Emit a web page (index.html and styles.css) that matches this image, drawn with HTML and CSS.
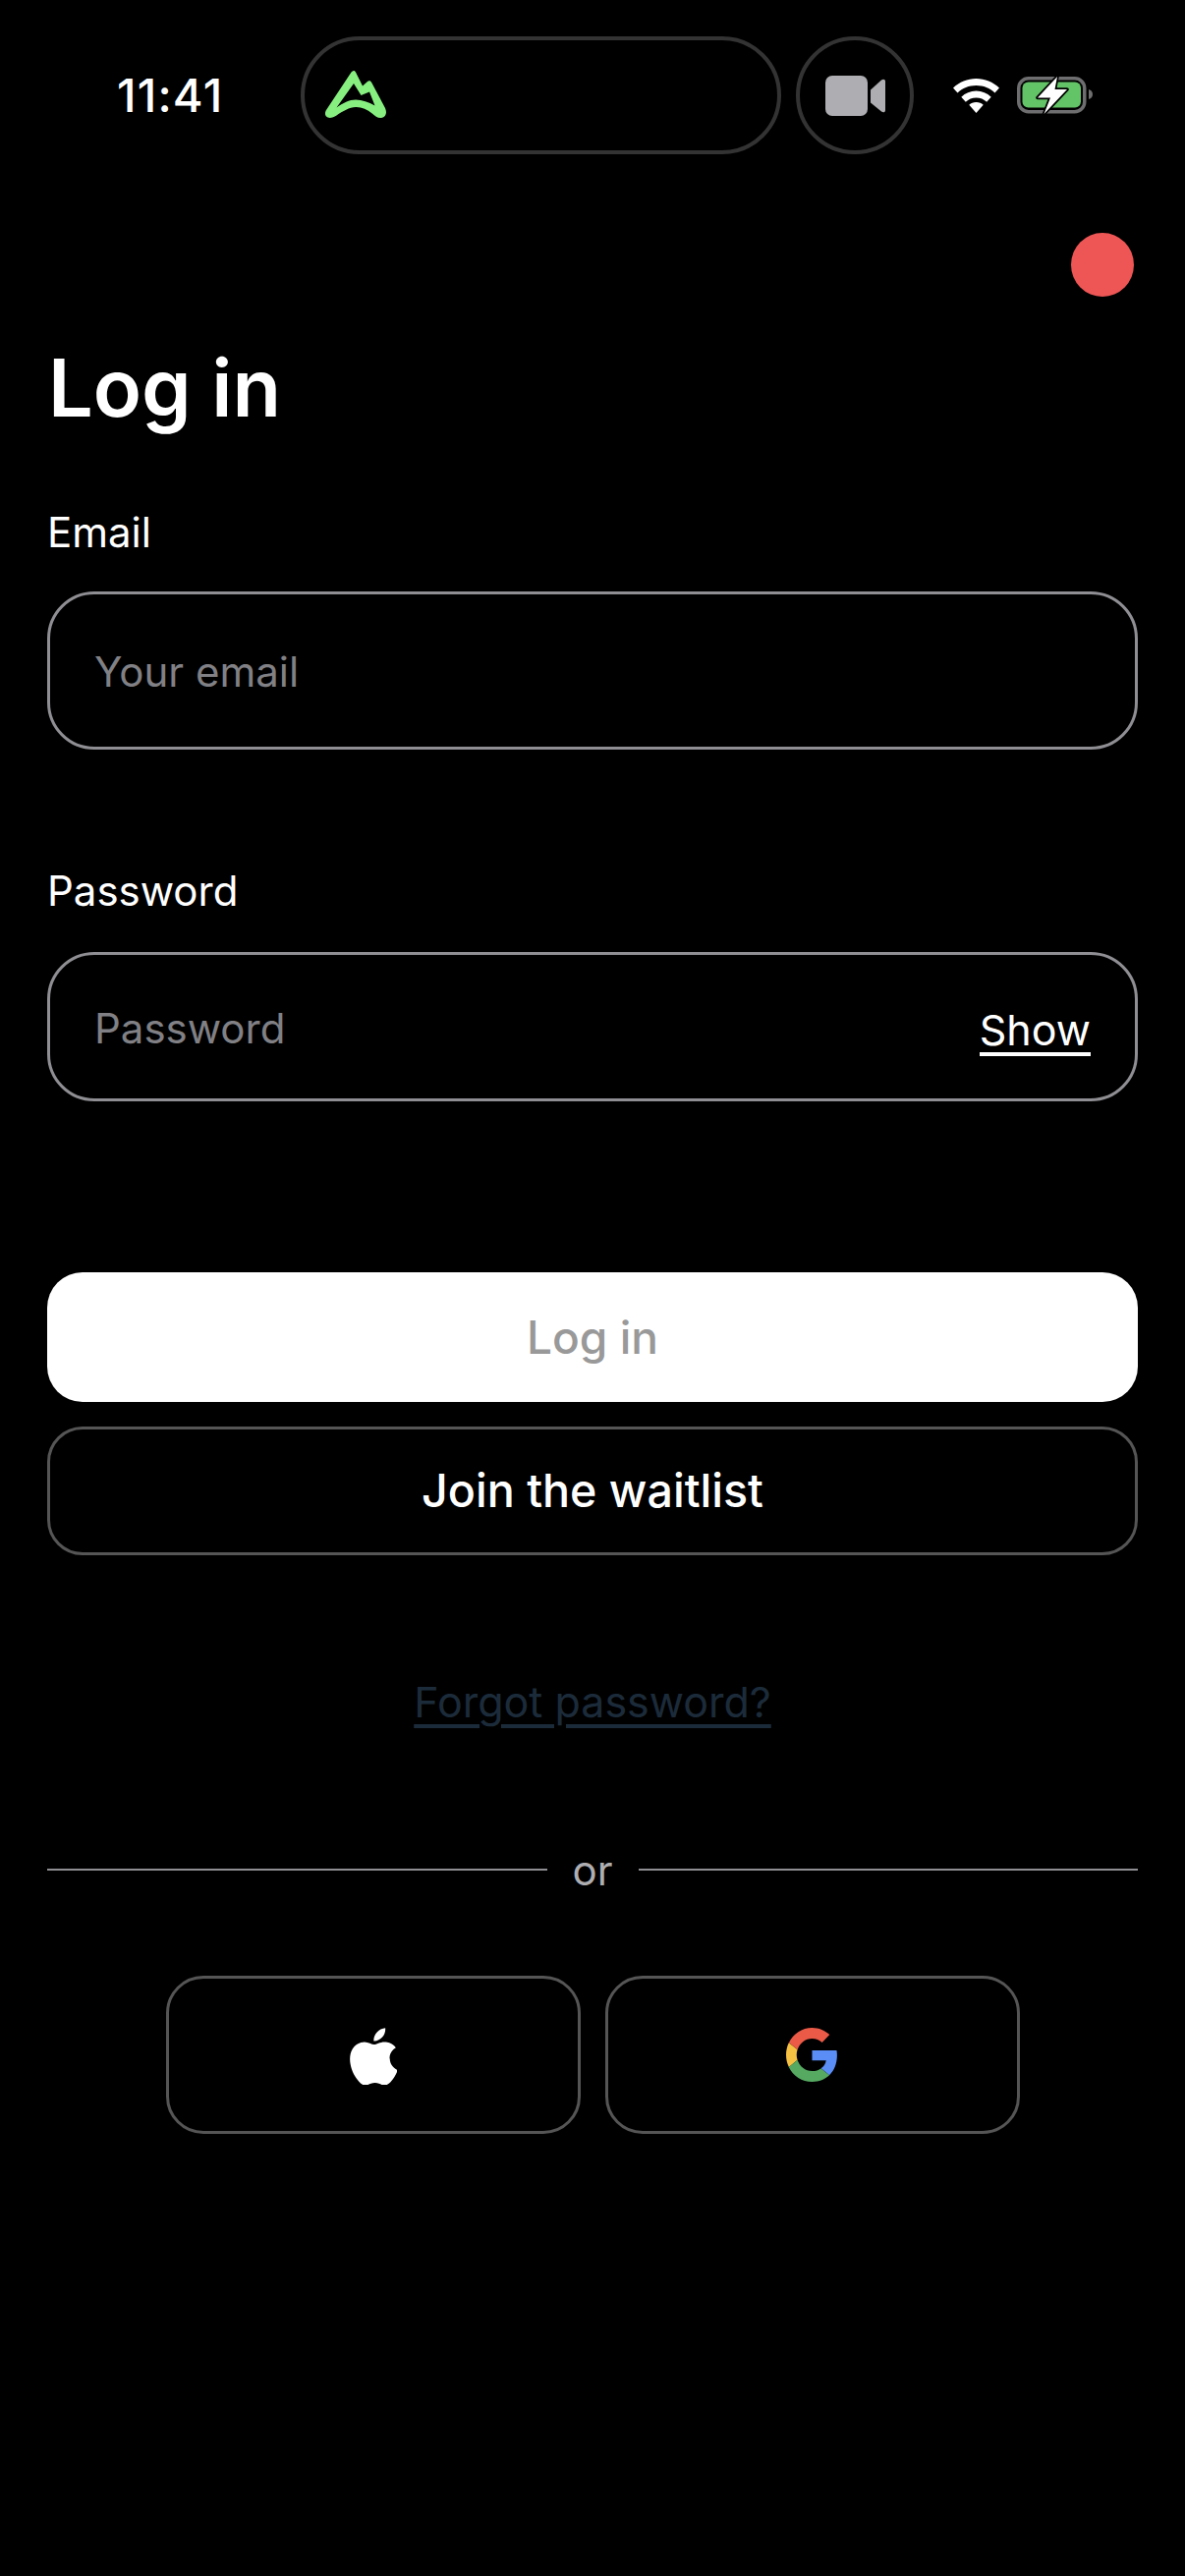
FILE: index.html
```html
<!DOCTYPE html>
<html lang="en">
<head>
<meta charset="utf-8">
<title>Log in</title>
<link rel="stylesheet" href="styles.css">
</head>
<body>
<div class="phone">
  <header class="status">
    <span class="time">11:41</span>
    <div class="island">
      <svg class="logo" viewBox="0 0 62 48"><path d="M26.500 1.500c1.500-2 3.500-2 4.500 0L38 15.500l5-4.500c1.500-1.200 3.300-.8 4.200 1L61 38c2 4.300 1 8.500-3 9.700-3.800 1-6.800-1-10.300-4.200C42.500 39 37 36.800 31 37 24.500 37.200 18 41 11.500 45.500 7.500 48.300 3 48.700 1 46.500-.8 44.300-.3 41.500 2 38.500zM29 13 11.500 37.500C18 33 24.500 29.500 31 29.500s13 2.500 19.500 6L45 21.500l-8.500 3.500z" fill="#86ef80" fill-rule="evenodd"/></svg>
    </div>
    <div class="cam">
      <svg class="cam-icon" viewBox="0 0 61 41"><rect x="0" y="0" width="43" height="41" rx="7" fill="#aeaeb2"/><path d="M46 14.500 57 4.500c2-1.500 4-.8 4 1.500v29c0 2.300-2 3-4 1.500L46 27.500z" fill="#aeaeb2"/></svg>
    </div>
    <div class="sys">
      <svg class="wifi" viewBox="0 0 47 35"><path d="M23.500 0C14.500 0 6.500 3.500 0 9.500l4.500 5C9.500 9.700 16 7 23.500 7s14 2.700 19 7.500l4.500-5C40.500 3.500 32.500 0 23.500 0z" fill="#fff"/><path d="M23.500 12.500c-6 0-11 2.300-15.200 6.200l4.500 5c3-2.700 6.500-4.200 10.700-4.200s7.700 1.500 10.700 4.200l4.500-5c-4.200-3.900-9.200-6.200-15.200-6.200z" fill="#fff"/><path d="M23.500 24c-3 0-5.300 1-7.200 2.800L23.500 35l7.200-8.200C28.800 25 26.500 24 23.500 24z" fill="#fff"/></svg>
      <svg class="battery" viewBox="0 0 78 38"><rect x="1.750" y="1.750" width="67" height="34" rx="10" fill="none" stroke="#6e6e70" stroke-width="3.500"/><rect x="5.500" y="5.500" width="59.500" height="26" rx="6" fill="#62c466"/><path d="M73 13c2.500.8 4 2.500 4 5s-1.500 4.200-4 5z" fill="#6e6e70"/><path d="M41 0 21 21.500h13L27.500 38 51 13H38.500z" fill="#fff" stroke="#000" stroke-width="3.500" paint-order="stroke" stroke-linejoin="round"/></svg>
    </div>
  </header>

  <main class="content">
    <div class="dot-row"><span class="dot"></span></div>
    <h1 class="title">Log in</h1>

    <label class="label label-email">Email</label>
    <div class="field field-email"><span class="placeholder">Your email</span></div>

    <label class="label label-pass">Password</label>
    <div class="field field-pass">
      <span class="placeholder">Password</span>
      <span class="show">Show</span>
    </div>

    <button class="btn btn-primary">Log in</button>
    <button class="btn btn-outline">Join the waitlist</button>

    <a class="forgot">Forgot password?</a>

    <div class="divider"><span class="rule"></span><span class="or">or</span><span class="rule"></span></div>

    <div class="social">
      <div class="social-btn">
        <svg class="apple" viewBox="4.500 2 43 54" preserveAspectRatio="none"><path d="M40.900 31.900c-.1-6.600 5.400-9.800 5.600-9.900-3.100-4.500-7.800-5.100-9.500-5.200-4-.4-7.900 2.400-9.900 2.400-2.100 0-5.200-2.300-8.600-2.300-4.400.1-8.500 2.600-10.800 6.500-4.600 8-1.200 19.900 3.300 26.400 2.200 3.200 4.800 6.800 8.300 6.600 3.300-.1 4.600-2.100 8.600-2.100s5.100 2.100 8.600 2.100c3.600-.1 5.800-3.200 8-6.400 2.500-3.700 3.600-7.300 3.600-7.500-.1 0-6.900-2.700-7-10.600zM34.400 12.400c1.800-2.200 3-5.200 2.700-8.300-2.600.1-5.800 1.700-7.600 3.900-1.700 1.900-3.100 5-2.700 8 2.900.2 5.800-1.500 7.600-3.600z" fill="#fff"/></svg>
      </div>
      <div class="social-btn">
        <svg class="google" viewBox="0 0 48 48" preserveAspectRatio="none"><path fill="#ea5a47" d="M24 9.500c3.500 0 6.700 1.200 9.200 3.600l6.900-6.900C35.900 2.400 30.500 0 24 0 14.600 0 6.500 5.400 2.600 13.200l8 6.200C12.400 13.700 17.700 9.500 24 9.500z"/><path fill="#5a8df5" d="M47 24.500c0-1.600-.1-3.100-.4-4.500H24v9h12.900c-.6 3-2.200 5.400-4.700 7.100l7.700 6C44.400 38 47 31.900 47 24.500z"/><path fill="#f6c143" d="M10.500 28.600c-.5-1.400-.8-3-.8-4.600s.3-3.200.8-4.600l-8-6.200C.9 16.400 0 20.100 0 24s.9 7.600 2.600 10.800z"/><path fill="#55a961" d="M24 48c6.500 0 11.900-2.100 15.900-5.800l-7.700-6c-2.100 1.400-4.900 2.300-8.200 2.300-6.300 0-11.600-4.200-13.500-9.900l-8 6.200C6.500 42.600 14.600 48 24 48z"/></svg>
      </div>
    </div>
  </main>
</div>
</body>
</html>
```

FILE: styles.css
```css
* { box-sizing: border-box; }
html, body { margin: 0; padding: 0; background: #000; }
body { width: 1206px; height: 2622px; overflow: hidden; font-family: "Inter", sans-serif; color: #fff; }
.phone { width: 1206px; height: 2622px; background: #000; }

.status { height: 157px; padding: 37px 0 0 119px; display: flex; align-items: flex-start; }
.time { width: 187px; height: 120px; font: 500 47px/120px "Inter", sans-serif; letter-spacing: 1.2px; }
.island { width: 489px; height: 120px; border: 4px solid #333; border-radius: 60px; display: flex; align-items: center; padding: 0 0 0 21px; }
.logo { width: 62px; height: 48px; margin-top: -2px; }
.cam { width: 120px; height: 120px; margin-left: 15px; border: 4px solid #333; border-radius: 50%; display: flex; align-items: center; justify-content: center; }
.cam-icon { width: 61px; height: 41px; }
.sys { display: flex; align-items: center; height: 120px; margin-left: 40px; gap: 18px; }
.wifi { width: 47px; height: 35px; }
.battery { width: 78px; height: 38px; }

.content { padding: 0 48px; display: flex; flex-direction: column; }
.dot-row { display: flex; justify-content: flex-end; height: 145px; padding-top: 80px; margin-right: 4px; }
.dot { width: 64px; height: 65px; border-radius: 50%; background: #ee5555; flex: none; }
.title { margin: 45px 0 0 1px; font-size: 81px; line-height: 96px; font-weight: 600; }
.label { display: block; font-size: 42px; line-height: 50px; }
.label-email { margin-top: 74px; }
.label-pass { margin-top: 119px; }
.field { border: 3px solid #8e8e93; border-radius: 48px; display: flex; align-items: center; justify-content: space-between; padding: 0 45px 0 46px; }
.field-email { height: 161px; margin-top: 35px; padding-top: 2px; }
.field-pass { height: 152px; margin-top: 37px; padding-top: 4px; }
.placeholder { color: #808085; font-size: 42px; line-height: 50px; margin-left: -1px; }
.show { font-size: 43px; line-height: 46px; margin-top: 5px; color: #fff; border-bottom: 4px solid #fff; }

.btn { display: block; width: 100%; font: 500 46px/1 "Inter", sans-serif; border-radius: 36px; background: none; padding: 0; }
.btn-primary { height: 132px; margin-top: 174px; background: #fff; border: 0; color: #999; }
.btn-outline { height: 131px; margin-top: 25px; border: 3px solid #555; color: #fff; font-size: 46.6px; }
.forgot { display: block; text-align: center; margin-top: 124px; font-size: 43px; line-height: 50px; color: #1c2b3a; text-decoration: underline; text-decoration-thickness: 4px; text-underline-offset: 7px; }
.divider { display: flex; align-items: center; margin-top: 122px; gap: 26px; }
.rule { flex: 1; height: 2px; background: #8e8e93; margin-top: -2px; }
.or { font-size: 42px; line-height: 50px; color: #aeaeb2; }
.social { display: flex; justify-content: center; gap: 25px; margin-top: 82px; }
.social-btn { width: 422px; height: 161px; border: 3px solid #555; border-radius: 38px; display: flex; align-items: center; justify-content: center; }
.apple { width: 49px; height: 60px; }
.google { width: 53px; height: 55px; }
```
